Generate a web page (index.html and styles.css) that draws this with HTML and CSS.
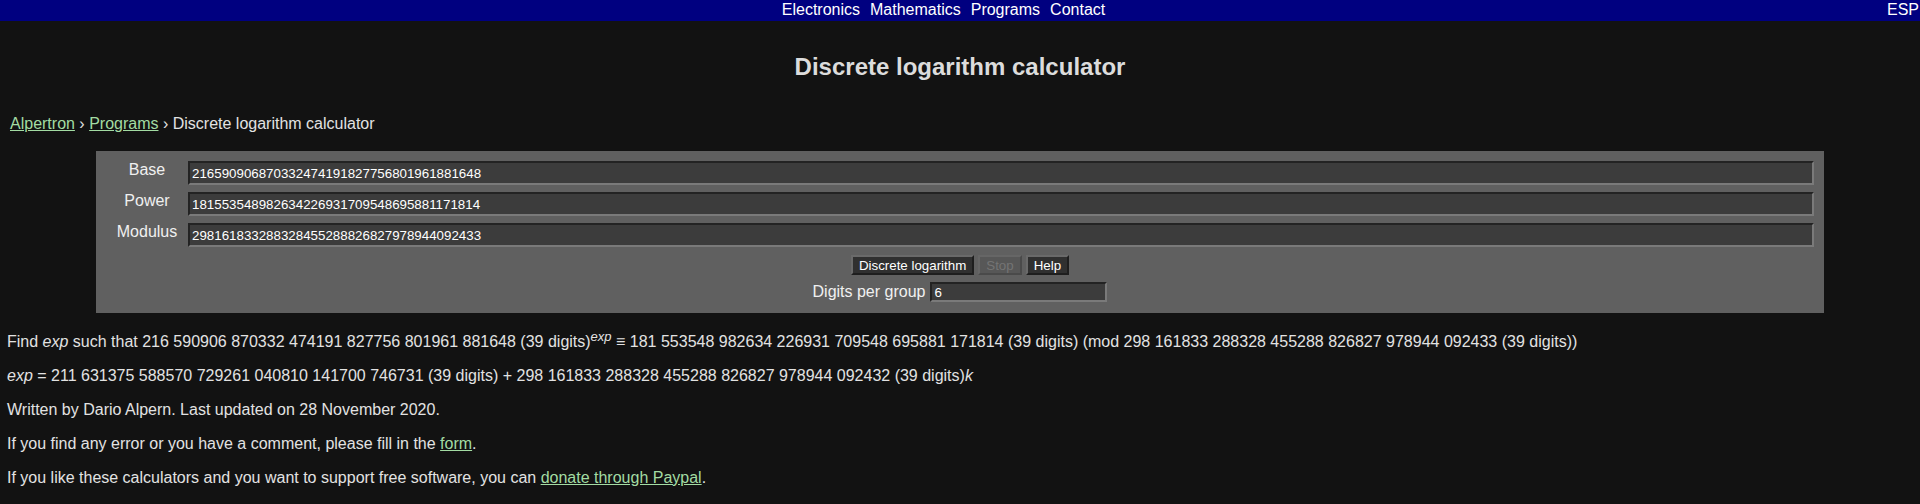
FILE: index.html
```html
<!DOCTYPE html>
<html lang="en">
<head>
<meta charset="utf-8">
<title>Discrete logarithm calculator</title>
<link rel="stylesheet" href="styles.css">
</head>
<body>
<div class="topbar">
  <nav class="nav">
    <a href="#">Electronics</a>
    <a href="#">Mathematics</a>
    <a href="#">Programs</a>
    <a href="#">Contact</a>
  </nav>
  <a class="lang" href="#">ESP</a>
</div>
<h1 class="title">Discrete logarithm calculator</h1>
<p class="crumbs"><a href="#">Alpertron</a> › <a href="#">Programs</a> › Discrete logarithm calculator</p>
<div class="panel">
  <div class="fields">
    <label class="lbl" for="base">Base</label>
    <input class="field" id="base" type="text" value="216590906870332474191827756801961881648">
    <label class="lbl" for="pow">Power</label>
    <input class="field" id="pow" type="text" value="181553548982634226931709548695881171814">
    <label class="lbl" for="mod">Modulus</label>
    <input class="field" id="mod" type="text" value="298161833288328455288826827978944092433">
  </div>
  <div class="buttons">
    <button class="btn" type="button">Discrete logarithm</button>
    <button class="btn btn-off" type="button" disabled>Stop</button>
    <button class="btn" type="button">Help</button>
  </div>
  <div class="groups">
    <label class="glbl" for="dig">Digits per group</label>
    <input class="field small" id="dig" type="text" value="6">
  </div>
</div>
<p class="out first">Find <i>exp</i> such that 216 590906 870332 474191 827756 801961 881648 (39 digits)<sup><i>exp</i></sup> ≡ 181 553548 982634 226931 709548 695881 171814 (39 digits) (mod 298 161833 288328 455288 826827 978944 092433 (39 digits))</p>
<p class="out"><i>exp</i> = 211 631375 588570 729261 040810 141700 746731 (39 digits) + 298 161833 288328 455288 826827 978944 092432 (39 digits)<i>k</i></p>
<p class="out">Written by Dario Alpern. Last updated on 28 November 2020.</p>
<p class="out">If you find any error or you have a comment, please fill in the <a href="#">form</a>.</p>
<p class="out">If you like these calculators and you want to support free software, you can <a href="#">donate through Paypal</a>.</p>
</body>
</html>
```
FILE: styles.css
```css
html, body {
  margin: 0;
  padding: 0;
  background: #121212;
  color: #e2e2e2;
  font-family: "Liberation Sans", Arial, sans-serif;
  font-size: 16px;
}
a { color: #a3dca3; }
.topbar {
  display: flex;
  background: #000080;
  height: 21px;
  line-height: 19px;
}
.nav {
  flex: 1;
  display: flex;
  justify-content: center;
  gap: 10px;
}
.nav a, .lang {
  color: #ffffff;
  text-decoration: none;
}
.lang { padding-right: 1px; }
.title {
  text-align: center;
  font-size: 24px;
  font-weight: bold;
  color: #dcdcdc;
  margin: 32px 0 0;
  line-height: 28px;
}
.crumbs {
  margin: 34px 10px 0;
  color: #e2e2e2;
}
.panel {
  width: 90%;
  margin: 18px auto 0;
  background: #606060;
  padding: 10px 10px 11px;
  box-sizing: border-box;
}
.fields {
  display: grid;
  grid-template-columns: 82px 1fr;
  row-gap: 7px;
  align-items: center;
}
.lbl {
  text-align: center;
  color: #f0f0f0;
  margin-top: -6px;
}
.field {
  height: 24px;
  box-sizing: border-box;
  background: #3c3c3c;
  color: #ffffff;
  font-family: "Liberation Sans", Arial, sans-serif;
  font-size: 13.33px;
  border: 2px solid;
  border-color: #232323 #7a7a7a #7a7a7a #232323;
  padding: 1px 2px 0;
  outline: none;
}
.buttons {
  display: flex;
  justify-content: center;
  gap: 4px;
  margin-top: 8px;
}
.btn {
  height: 20px;
  padding: 0 6px;
  font-family: "Liberation Sans", Arial, sans-serif;
  font-size: 13.33px;
  font-weight: normal;
  color: #ffffff;
  background: #303030;
  border: 2px solid;
  border-color: #6a6a6a #1e1e1e #1e1e1e #6a6a6a;
}
.btn-off {
  background: #575757;
  color: #747474;
  border-color: #666 #4a4a4a #4a4a4a #666;
}
.groups {
  display: flex;
  justify-content: center;
  align-items: center;
  gap: 5px;
  margin-top: 7px;
}
.glbl { color: #f0f0f0; }
.field.small {
  width: 177px;
  height: 20px;
}
.out {
  margin: 16px 7px 0;
  line-height: 18px;
}
.out.first { margin-top: 20px; }
.out sup { font-size: 13px; line-height: 0; }
```
